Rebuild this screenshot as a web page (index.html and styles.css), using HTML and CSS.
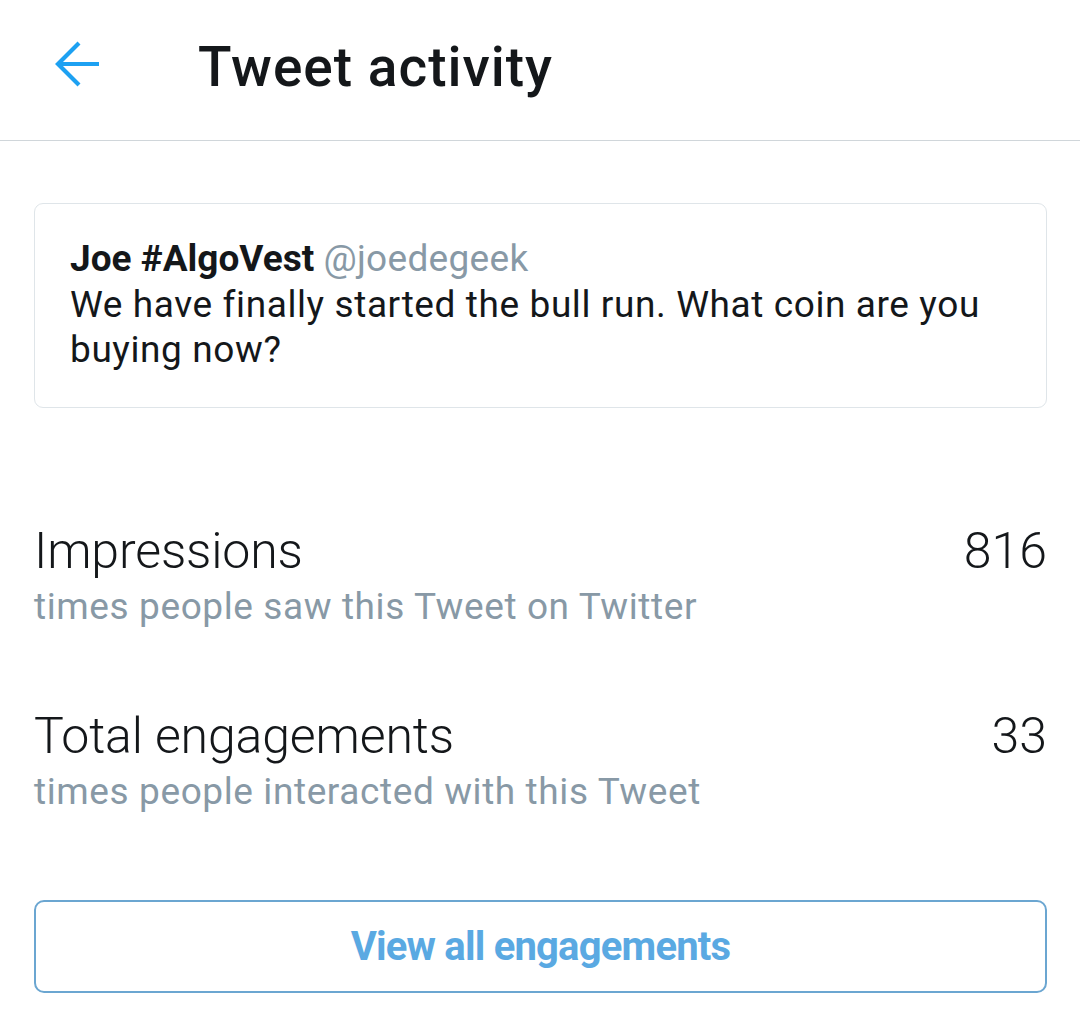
FILE: index.html
```html
<!DOCTYPE html>
<html>
<head>
<meta charset="utf-8">
<link rel="stylesheet" href="styles.css">
</head>
<body>
<div class="page">
  <header class="topbar">
    <span class="back" aria-label="Back">
      <svg width="52" height="48" viewBox="0 0 52 48"><path d="M49 24H9M29 3L8 24l21 21" fill="none" stroke="#1da1f2" stroke-width="4.2" stroke-linecap="butt" stroke-linejoin="miter"/></svg>
    </span>
    <h1 class="title">Tweet activity</h1>
  </header>
  <main class="content">
    <section class="tweet">
      <div class="tweet-head"><span class="name">Joe #AlgoVest</span> <span class="handle">@joedegeek</span></div>
      <p class="tweet-text">We have finally started the bull run. What coin are you buying now?</p>
    </section>
    <section class="stat stat-first">
      <div class="stat-row"><span class="stat-label">Impressions</span><span class="stat-value">816</span></div>
      <div class="stat-desc">times people saw this Tweet on Twitter</div>
    </section>
    <section class="stat">
      <div class="stat-row"><span class="stat-label">Total engagements</span><span class="stat-value">33</span></div>
      <div class="stat-desc">times people interacted with this Tweet</div>
    </section>
    <button class="view-btn">View all engagements</button>
  </main>
</div>
</body>
</html>
```
FILE: styles.css
```css
* { box-sizing: border-box; }
html, body { margin: 0; padding: 0; background: #fff; }
body { font-family: Roboto, "Noto Sans", sans-serif; color: #14171a; }
.page { width: 1080px; height: 1030px; overflow: hidden; }
.topbar {
  height: 141px;
  border-bottom: 1.5px solid #d0d6da;
  display: flex;
  align-items: flex-start;
  padding-left: 50px;
}
.back { display: flex; width: 52px; height: 48px; margin-top: 40px; }
.title {
  margin: 35px 0 0 96px;
  font-size: 55px;
  line-height: 64px;
  font-weight: 500;
  letter-spacing: 1px;
  color: #14171a;
}
.content { padding: 62px 33px 0 34px; }
.tweet {
  border: 1.5px solid #dfe5e9;
  border-radius: 9px;
  height: 205px;
  padding: 32px 30px 0 35px;
}
.tweet-head { font-size: 37px; line-height: 46px; }
.name { font-weight: 700; color: #14171a; }
.handle { color: #8899a6; font-weight: 400; letter-spacing: 0.3px; }
.tweet-text { margin: 0; font-size: 37px; line-height: 45px; color: #14171a; letter-spacing: 0.6px; }
.stat-first { margin-top: 113px; }
.stat + .stat { margin-top: 75px; }
.stat-row { display: flex; justify-content: space-between; align-items: baseline; }
.stat-label, .stat-value { font-size: 50px; font-weight: 300; line-height: 60px; color: #14171a; }
.stat-label { letter-spacing: -0.15px; }
.stat-desc { margin-top: 2px; font-size: 37px; line-height: 48px; color: #8899a6; letter-spacing: 0.6px; }
.view-btn {
  display: block;
  width: 100%;
  height: 93px;
  margin-top: 84px;
  background: #fff;
  border: 2px solid #6ba6d1;
  border-radius: 10px;
  font-family: Roboto, sans-serif;
  font-size: 40px;
  font-weight: 700;
  letter-spacing: -0.8px;
  color: #5aa9e2;
  padding: 0;
}
```
